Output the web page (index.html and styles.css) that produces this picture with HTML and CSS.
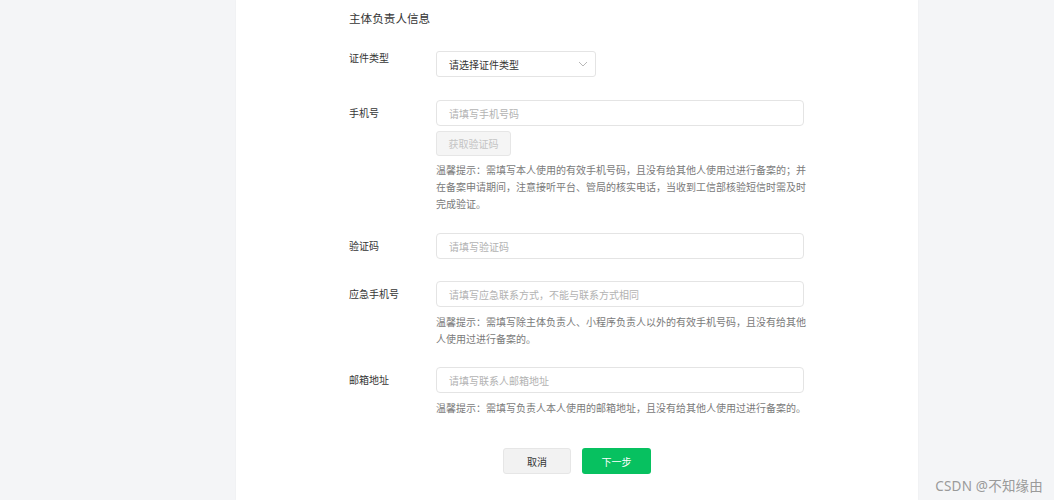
FILE: index.html
```html
<!DOCTYPE html>
<html lang="zh-CN">
<head>
<meta charset="utf-8">
<title>主体负责人信息</title>
<link rel="stylesheet" href="styles.css">
</head>
<body>
<div class="panel">
  <div class="form">
    <div class="title">主体负责人信息</div>

    <div class="row row-first">
      <div class="label label-top">证件类型</div>
      <div class="control">
        <div class="select">
          <span>请选择证件类型</span>
          <svg class="chev" width="10" height="6" viewBox="0 0 10 6"><path d="M1 1 L5 5 L9 1" fill="none" stroke="#b8b8b8" stroke-width="1"/></svg>
        </div>
      </div>
    </div>

    <div class="row">
      <div class="label">手机号</div>
      <div class="control">
        <div class="input"><span class="ph">请填写手机号码</span></div>
        <div class="btn-code">获取验证码</div>
        <div class="hint">温馨提示：需填写本人使用的有效手机号码，且没有给其他人使用过进行备案的；并在备案申请期间，注意接听平台、管局的核实电话，当收到工信部核验短信时需及时完成验证。</div>
      </div>
    </div>

    <div class="row row-code">
      <div class="label">验证码</div>
      <div class="control">
        <div class="input"><span class="ph">请填写验证码</span></div>
      </div>
    </div>

    <div class="row row-tight">
      <div class="label">应急手机号</div>
      <div class="control">
        <div class="input"><span class="ph">请填写应急联系方式，不能与联系方式相同</span></div>
        <div class="hint hint-close">温馨提示：需填写除主体负责人、小程序负责人以外的有效手机号码，且没有给其他人使用过进行备案的。</div>
      </div>
    </div>

    <div class="row row-mail">
      <div class="label">邮箱地址</div>
      <div class="control">
        <div class="input"><span class="ph">请填写联系人邮箱地址</span></div>
        <div class="hint hint-close">温馨提示：需填写负责人本人使用的邮箱地址，且没有给其他人使用过进行备案的。</div>
      </div>
    </div>
  </div>

  <div class="actions">
    <div class="btn btn-cancel">取消</div>
    <div class="btn btn-next">下一步</div>
  </div>
</div>
<div class="watermark">CSDN @不知缘由</div>
</body>
</html>
```

FILE: styles.css
```css
html, body {
  margin: 0;
  padding: 0;
}
body {
  background: #f4f5f7;
  font-family: "Noto Sans CJK SC", "Noto Sans", sans-serif;
  color: #353535;
  height: 500px;
  overflow: hidden;
  position: relative;
}
.panel {
  margin-left: 236px;
  width: 682px;
  height: 500px;
  background: #ffffff;
  box-shadow: 0 0 2px rgba(0,0,0,0.04);
}
.form {
  padding-left: 113px;
  padding-top: 9px;
}
.title {
  font-size: 11.6px;
  line-height: 18px;
  color: #353535;
}
.row {
  display: grid;
  grid-template-columns: 87px 372px;
  margin-top: 23px;
}
.row-first {
  margin-top: 24px;
}
.row-code {
  margin-top: 21px;
}
.row-tight {
  margin-top: 22px;
}
.row-mail {
  margin-top: 20px;
}
.label {
  font-size: 10px;
  line-height: 26px;
  color: #353535;
}
.label-top {
  line-height: 14px;
}
.control {
  display: flex;
  flex-direction: column;
  align-items: flex-start;
}
.select {
  box-sizing: border-box;
  width: 160px;
  height: 26px;
  border: 1px solid #e4e4e4;
  border-radius: 3px;
  padding: 0 7px 0 12px;
  display: flex;
  align-items: center;
  justify-content: space-between;
  font-size: 10px;
  color: #353535;
}
.input {
  box-sizing: border-box;
  width: 368px;
  height: 26px;
  border: 1px solid #e4e4e4;
  border-radius: 4px;
  padding: 0 12px;
  display: flex;
  align-items: center;
  font-size: 10px;
}
.ph {
  color: #b2b2b2;
}
.btn-code {
  box-sizing: border-box;
  margin-top: 5px;
  width: 75px;
  height: 25px;
  border: 1px solid #e6e6e6;
  border-radius: 3px;
  background: #f5f5f5;
  color: #c4c4c4;
  font-size: 10px;
  display: flex;
  align-items: center;
  justify-content: center;
}
.hint {
  margin-top: 5px;
  width: 372px;
  font-size: 10px;
  line-height: 17px;
  color: #7a7a7a;
}
.hint-close {
  margin-top: 6px;
}
.actions {
  display: flex;
  justify-content: center;
  gap: 11px;
  margin-top: 32px;
}
.btn {
  box-sizing: border-box;
  width: 68px;
  height: 26px;
  border-radius: 3px;
  font-size: 10px;
  display: flex;
  align-items: center;
  justify-content: center;
}
.btn-cancel {
  background: #f2f2f2;
  border: 1px solid #e6e6e6;
  color: #353535;
}
.btn-next {
  width: 69px;
  background: #07c160;
  color: #ffffff;
}
.watermark {
  position: absolute;
  right: 11px;
  bottom: 5px;
  font-family: "Noto Sans", "Noto Sans CJK SC", sans-serif;
  font-size: 13.5px;
  color: #9a9a9a;
  letter-spacing: 0.2px;
}
```
